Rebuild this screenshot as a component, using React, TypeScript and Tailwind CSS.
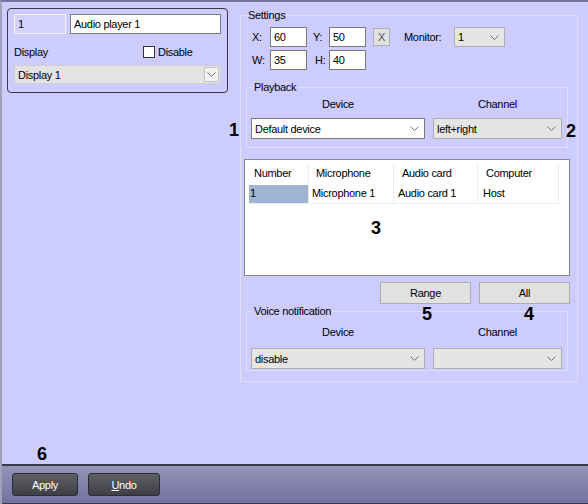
import type { ReactNode } from 'react'

// ── Small pieces ──────────────────────────────────────────────────────────────

const Chevron = () => (
  <svg width="9" height="5" viewBox="0 0 9 5" className="shrink-0">
    <polyline points="0.5,0.5 4.5,4.5 8.5,0.5" fill="none" stroke="#707070" strokeWidth="1" />
  </svg>
)

function Select({ value, className, white }: { value?: string; className: string; white?: boolean }) {
  return (
    <div
      className={`flex items-center justify-between border pl-[3px] pr-[5px] ${
        white ? 'bg-white border-[#7a7a7a]' : 'bg-[#e5e5e5] border-[#adadad]'
      } ${className}`}
    >
      <span>{value}</span>
      <Chevron />
    </div>
  )
}

function TextBox({ value, className }: { value: string; className: string }) {
  return (
    <div className={`flex items-center h-[20px] bg-white border border-[#7a7a7a] pl-[3px] ${className}`}>
      {value}
    </div>
  )
}

function Group({ label, className, children }: { label: string; className: string; children?: ReactNode }) {
  return (
    <div className={`relative border border-[#dfdff4] ${className}`}>
      <span className="absolute -top-[7px] left-[6px] px-[1px] bg-[#ccccfe] leading-[12px]">{label}</span>
      {children}
    </div>
  )
}

function Mark({ n, className }: { n: string; className: string }) {
  return (
    <span className={`absolute text-[18px] leading-none font-bold tracking-normal text-black ${className}`}>{n}</span>
  )
}

// ── Table ─────────────────────────────────────────────────────────────────────

const COLS = [
  { w: 'w-[60px]', head: 'Number', hp: 'pl-[5px]', cell: '1', cp: 'pl-[1px]' },
  { w: 'w-[85px]', head: 'Microphone', hp: 'pl-[7px]', cell: 'Microphone 1', cp: 'pl-[3px]' },
  { w: 'w-[84px]', head: 'Audio card', hp: 'pl-[8px]', cell: 'Audio card 1', cp: 'pl-[4px]' },
  { w: 'w-[81px]', head: 'Computer', hp: 'pl-[8px]', cell: 'Host', cp: 'pl-[5px]' },
]

function MicTable() {
  return (
    <div className="ml-[3px] mt-[11px] w-[326px] h-[117px] border border-[#828790] bg-white pl-[4px] pt-[3px]">
      <div className="flex h-[22px]">
        {COLS.map(c => (
          <div key={c.head} className={`${c.w} ${c.hp} h-full pt-[4px] border-r border-[#ececec]`}>
            {c.head}
          </div>
        ))}
      </div>
      <div className="flex h-[19px] w-[310px] border-b border-[#ececec]">
        {COLS.map((c, i) => (
          <div
            key={c.head}
            className={`${c.w} ${c.cp} h-full pt-[2px] border-r border-[#ececec] ${i === 0 ? 'bg-[#a0b5d1]' : ''}`}
          >
            {c.cell}
          </div>
        ))}
      </div>
    </div>
  )
}

// ── Main page ─────────────────────────────────────────────────────────────────

export default function App() {
  return (
    <div className="w-[588px] h-[504px] relative overflow-hidden flex flex-col bg-[#ccccfe] border-t-2 border-l-2 border-t-[#74749a] border-l-[#a0a0bc] text-[11px] leading-[12px] text-black tracking-[-0.3px] font-['Liberation_Sans',Arial,sans-serif]">
      <div className="flex-1 flex items-start">
        {/* Object card */}
        <div className="ml-[5px] mt-[6px] w-[221px] h-[85px] border border-[#3a3a4a] rounded-[4px] px-[6px] pt-[5px]">
          <div className="flex gap-[4px]">
            <div className="flex items-center w-[52px] h-[20px] bg-[#d3d3fc] border border-[#f4f4ff] pl-[3px]">1</div>
            <TextBox value="Audio player 1" className="w-[151px]" />
          </div>
          <div className="flex items-center mt-[12px] h-[12px]">
            <span className="w-[129px]">Display</span>
            <span className="w-[12px] h-[12px] bg-white border border-[#333]" />
            <span className="ml-[3px]">Disable</span>
          </div>
          <div className="mt-[7px] h-[19px] flex items-center justify-between bg-[#e3e3e3] border border-[#cfcfcf] pl-[3px] pr-[1px]">
            <span>Display 1</span>
            <span className="w-[15px] h-[15px] flex items-center justify-center bg-[#f2f2f2] border border-[#c4c4c4]">
              <Chevron />
            </span>
          </div>
        </div>

        {/* Settings */}
        <Group label="Settings" className="ml-[12px] mt-[13px] w-[338px] h-[367px]">
          <div className="ml-[11px] mt-[11px] flex items-center h-[20px]">
            <span className="w-[18px]">X:</span>
            <TextBox value="60" className="w-[37px]" />
            <span className="w-[22px] pl-[6px]">Y:</span>
            <TextBox value="50" className="w-[37px]" />
            <div className="ml-[7px] w-[17px] h-[18px] flex items-center justify-center bg-[#e1e1e1] border border-[#adadad] text-[#555]">
              X
            </div>
            <span className="ml-[14px] w-[50px]">Monitor:</span>
            <Select value="1" className="w-[51px] h-[20px]" />
          </div>
          <div className="ml-[11px] mt-[3px] flex items-center h-[20px]">
            <span className="w-[18px]">W:</span>
            <TextBox value="35" className="w-[37px]" />
            <span className="w-[22px] pl-[8px]">H:</span>
            <TextBox value="40" className="w-[37px]" />
          </div>

          <Group label="Playback" className="ml-[5px] mt-[17px] w-[322px] h-[61px] pl-[4px] pt-[10px]">
            <div className="flex">
              <span className="w-[174px] text-center">Device</span>
              <span className="ml-[8px] w-[129px] text-center">Channel</span>
            </div>
            <div className="flex gap-[8px] mt-[8px]">
              <Select value="Default device" white className="w-[174px] h-[21px]" />
              <Select value="left+right" className="w-[129px] h-[21px]" />
            </div>
          </Group>

          <MicTable />

          <div className="ml-[3px] mt-[6px] w-[326px] flex justify-end gap-[8px]">
            <div className="w-[91px] h-[22px] flex items-center justify-center bg-[#e1e1e1] border border-[#adadad]">Range</div>
            <div className="w-[91px] h-[22px] flex items-center justify-center bg-[#e1e1e1] border border-[#adadad]">All</div>
          </div>

          <Group label="Voice notification" className="ml-[5px] mt-[7px] w-[322px] h-[60px] pl-[4px] pt-[14px]">
            <div className="flex">
              <span className="w-[174px] text-center">Device</span>
              <span className="ml-[8px] w-[129px] text-center">Channel</span>
            </div>
            <div className="flex gap-[8px] mt-[10px]">
              <Select value="disable" className="w-[174px] h-[21px]" />
              <Select className="w-[129px] h-[21px]" />
            </div>
          </Group>
        </Group>
      </div>

      {/* Bottom bar */}
      <div className="h-[40px] shrink-0 flex items-start gap-[10px] pl-[10px] pt-[7px] border-t-2 border-b border-[#3a3a48] bg-gradient-to-b from-[#9494b8] to-[#7272a0]">
        <button className="w-[66px] h-[23px] rounded-[3px] border border-[#2c2c34] bg-gradient-to-b from-[#606068] to-[#3e3e45] text-white">
          Apply
        </button>
        <button className="w-[72px] h-[23px] rounded-[3px] border border-[#2c2c34] bg-gradient-to-b from-[#606068] to-[#3e3e45] text-white">
          <span className="underline">U</span>ndo
        </button>
      </div>

      {/* Callout numbers */}
      <Mark n="1" className="left-[227px] top-[119px]" />
      <Mark n="2" className="left-[564px] top-[120px]" />
      <Mark n="3" className="left-[369px] top-[217px]" />
      <Mark n="5" className="left-[420px] top-[303px]" />
      <Mark n="4" className="left-[522px] top-[303px]" />
      <Mark n="6" className="left-[35px] top-[443px]" />
    </div>
  )
}
